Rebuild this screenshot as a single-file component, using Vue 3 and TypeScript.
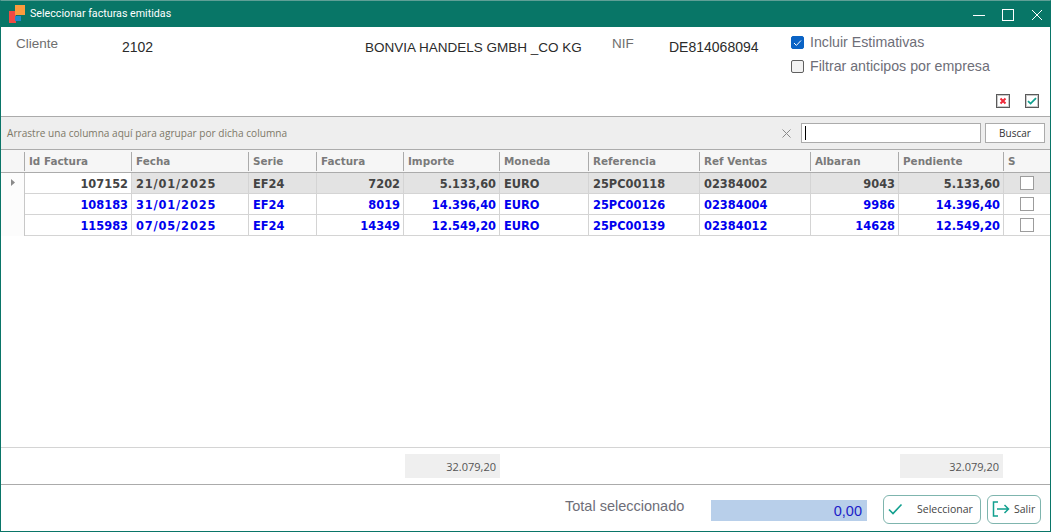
<script setup lang="ts">
type Row = {
  id: string;
  fecha: string;
  serie: string;
  factura: string;
  importe: string;
  moneda: string;
  referencia: string;
  refVentas: string;
  albaran: string;
  pendiente: string;
};

const columns = [
  "Id Factura",
  "Fecha",
  "Serie",
  "Factura",
  "Importe",
  "Moneda",
  "Referencia",
  "Ref Ventas",
  "Albaran",
  "Pendiente",
  "S",
];

const rows: Row[] = [
  {
    id: "107152",
    fecha: "21/01/2025",
    serie: "EF24",
    factura: "7202",
    importe: "5.133,60",
    moneda: "EURO",
    referencia: "25PC00118",
    refVentas: "02384002",
    albaran: "9043",
    pendiente: "5.133,60",
  },
  {
    id: "108183",
    fecha: "31/01/2025",
    serie: "EF24",
    factura: "8019",
    importe: "14.396,40",
    moneda: "EURO",
    referencia: "25PC00126",
    refVentas: "02384004",
    albaran: "9986",
    pendiente: "14.396,40",
  },
  {
    id: "115983",
    fecha: "07/05/2025",
    serie: "EF24",
    factura: "14349",
    importe: "12.549,20",
    moneda: "EURO",
    referencia: "25PC00139",
    refVentas: "02384012",
    albaran: "14628",
    pendiente: "12.549,20",
  },
];
</script>

<template>
  <div class="window">
    <header class="titlebar">
      <svg class="logo" width="24" height="22" viewBox="0 0 24 22">
        <rect x="0" y="6" width="7" height="12" fill="#f04a45" />
        <rect x="6" y="0" width="10" height="10" fill="#fb9b3d" />
        <rect x="6" y="11" width="6" height="5" fill="#2389c9" />
      </svg>
      <span class="title">Seleccionar facturas emitidas</span>
      <div class="win-buttons">
        <svg width="12" height="12" viewBox="0 0 12 12"><path d="M0 6.5h12" stroke="#fff" fill="none" /></svg>
        <svg width="12" height="12" viewBox="0 0 12 12"><rect x="0.5" y="0.5" width="11" height="11" stroke="#fff" fill="none" /></svg>
        <svg width="12" height="12" viewBox="0 0 12 12"><path d="M1 1l10 10M11 1L1 11" stroke="#fff" fill="none" /></svg>
      </div>
    </header>

    <section class="form">
      <div class="form-fields">
        <span class="label cliente">Cliente</span>
        <span class="value codigo">2102</span>
        <span class="value nombre">BONVIA HANDELS GMBH _CO KG</span>
        <span class="label nif">NIF</span>
        <span class="value nif-value">DE814068094</span>
        <div class="checks">
          <label class="check">
            <span class="box on">
              <svg width="9" height="8" viewBox="0 0 9 8"><path d="M1 4l2.4 2.4L8 1.5" stroke="#fff" fill="none" /></svg>
            </span>
            Incluir Estimativas
          </label>
          <label class="check">
            <span class="box"></span>
            Filtrar anticipos por empresa
          </label>
        </div>
      </div>
      <div class="mini-tools">
        <span class="mini">
          <svg width="8" height="8" viewBox="0 0 8 8"><path d="M1.5 1.5l5 5M6.5 1.5l-5 5" stroke="#ee2a3a" stroke-width="2" fill="none" /></svg>
        </span>
        <span class="mini">
          <svg width="10" height="8" viewBox="0 0 10 8"><path d="M1 4.2l2.6 2.4L9 1.2" stroke="#12a08f" stroke-width="1.8" fill="none" /></svg>
        </span>
      </div>
    </section>

    <div class="group-bar">
      <span class="group-hint">Arrastre una columna aquí para agrupar por dicha columna</span>
      <svg class="clear" width="9" height="9" viewBox="0 0 9 9"><path d="M0.5 0.5l8 8M8.5 0.5l-8 8" stroke="#8a8a8a" fill="none" /></svg>
      <div class="search"><i class="caret"></i></div>
      <button class="buscar">Buscar</button>
    </div>

    <div class="grid-head grid-cols">
      <div class="head-cell indicator"></div>
      <div v-for="col in columns" :key="col" class="head-cell"><span>{{ col }}</span></div>
    </div>

    <div class="grid-body">
      <div
        v-for="(row, i) in rows"
        :key="row.id"
        class="grid-row grid-cols"
        :class="{ current: i === 0 }"
      >
        <div class="indicator-cell">
          <svg v-if="i === 0" width="4" height="7" viewBox="0 0 4 7"><path d="M0 0l4 3.5L0 7z" fill="#8a8a8a" /></svg>
        </div>
        <div class="cell right id-cell">{{ row.id }}</div>
        <div class="cell fecha">{{ row.fecha }}</div>
        <div class="cell">{{ row.serie }}</div>
        <div class="cell right">{{ row.factura }}</div>
        <div class="cell right">{{ row.importe }}</div>
        <div class="cell">{{ row.moneda }}</div>
        <div class="cell">{{ row.referencia }}</div>
        <div class="cell">{{ row.refVentas }}</div>
        <div class="cell right">{{ row.albaran }}</div>
        <div class="cell right">{{ row.pendiente }}</div>
        <div class="cell check-cell"><span class="row-check"></span></div>
      </div>
    </div>

    <div class="summary grid-cols">
      <div class="sum sum-importe">32.079,20</div>
      <div class="sum sum-pendiente">32.079,20</div>
    </div>

    <footer class="bottom">
      <span class="total-label">Total seleccionado</span>
      <div class="total-value">0,00</div>
      <button class="action seleccionar">
        <svg width="15" height="12" viewBox="0 0 15 12"><path d="M1 6.5l4 4L13.5 1.5" stroke="#12a08f" stroke-width="1.6" fill="none" /></svg>
        <span>Seleccionar</span>
      </button>
      <button class="action salir">
        <svg width="18" height="16" viewBox="0 0 18 16">
          <path d="M6 1H1.5v14H6M5 8h11.5M12.5 4l4 4-4 4" stroke="#12a08f" stroke-width="1.5" fill="none" />
        </svg>
        <span>Salir</span>
      </button>
    </footer>
  </div>
</template>

<style scoped>
.window {
  width: 1051px;
  height: 532px;
  box-sizing: border-box;
  display: flex;
  flex-direction: column;
  background: #fff;
  border: 1px solid #0a7568;
  border-top-color: #5f9f96;
  font-family: "Liberation Sans", Arial, sans-serif;
  overflow: hidden;
}

.titlebar {
  height: 26px;
  flex: none;
  display: flex;
  align-items: center;
  background: #087667;
  color: #fff;
  font-family: Roboto, "Liberation Sans", sans-serif;
  font-size: 10.7px;
}

.logo {
  margin: 4px 0 0 8px;
  flex: none;
}

.title {
  margin-left: -3px;
  margin-top: -1px;
}

.win-buttons {
  margin-left: auto;
  display: flex;
  gap: 17px;
  padding-right: 7px;
  align-items: center;
  margin-top: 1px;
}

.form {
  height: 89px;
  flex: none;
  display: flex;
  flex-direction: column;
}

.form-fields {
  display: flex;
  align-items: flex-start;
  height: 67px;
}

.label {
  font-size: 13.5px;
  color: #6e6e6e;
  margin-top: 9px;
}

.value {
  font-size: 14px;
  color: #2b2b2b;
  margin-top: 12px;
}

.cliente { margin-left: 15px; width: 106px; }
.codigo { width: 243px; }
.nombre { width: 247px; font-size: 13.5px; margin-top: 13px; }
.nif { width: 57px; }
.nif-value { width: 122px; }

.checks {
  display: flex;
  flex-direction: column;
  gap: 9px;
  margin-top: 8px;
}

.check {
  display: flex;
  align-items: center;
  gap: 6px;
  font-size: 14.2px;
  line-height: 15px;
  color: #6e6e78;
}

.box {
  width: 11px;
  height: 11px;
  border: 1px solid #5f5f5f;
  border-radius: 2px;
  background: #f2f2f2;
  display: flex;
  align-items: center;
  justify-content: center;
}

.box.on {
  background: #0a63c5;
  border-color: #0a63c5;
}

.mini-tools {
  display: flex;
  justify-content: flex-end;
  gap: 15px;
  padding-right: 11px;
}

.mini {
  width: 12px;
  height: 12px;
  border: 1px solid #5a5a5a;
  display: flex;
  align-items: center;
  justify-content: center;
  box-shadow: 0 0 0 1px #c8c8c8 inset;
}

.group-bar {
  height: 34px;
  flex: none;
  box-sizing: border-box;
  display: flex;
  align-items: center;
  background: #eeeeee;
  border-top: 1px solid #ababab;
  border-bottom: 1px solid #ababab;
  padding-left: 6px;
}

.group-hint {
  font-family: "Open Sans", "Liberation Sans", sans-serif;
  font-size: 10.1px;
  color: #7d7868;
}

.clear {
  margin-left: auto;
}

.search {
  width: 178px;
  height: 18px;
  margin-left: 10px;
  border: 1px solid #ababab;
  background: #fff;
  display: flex;
  align-items: center;
}

.caret {
  display: block;
  width: 1px;
  height: 14px;
  margin-left: 3px;
  background: #000;
}

.buscar {
  width: 60px;
  height: 20px;
  margin: 0 5px 0 4px;
  padding: 0;
  border: 1px solid #ababab;
  background: #fff;
  font-family: "Open Sans", "Liberation Sans", sans-serif;
  font-size: 10px;
  color: #333;
}

.grid-cols {
  display: grid;
  grid-template-columns: 24px 107px 117px 68px 87px 96px 89px 111px 111px 88px 105px 46px;
}

.grid-head {
  height: 23px;
  flex: none;
  box-sizing: border-box;
  background: #f6f6f6;
  border-bottom: 1px solid #ababab;
  font-family: "DejaVu Sans", Verdana, sans-serif;
  font-size: 10.4px;
  font-weight: 700;
  color: #7a7a7a;
}

.head-cell {
  display: flex;
  align-items: center;
  box-sizing: border-box;
  height: 19px;
  margin-top: 2px;
  padding: 0 0 1px 4px;
  border-right: 1px solid #ababab;
}

.grid-head .head-cell:last-child {
  border-right: none;
}

.grid-body {
  flex: 1;
  min-height: 0;
  font-family: "DejaVu Sans", Verdana, sans-serif;
  font-size: 11.4px;
  font-weight: 700;
  color: #0000ee;
  border-bottom: 1px solid #d4d4d4;
}

.grid-row {
  height: 21px;
}

.grid-row.current {
  color: #444;
}

.indicator-cell {
  display: flex;
  align-items: center;
  padding-left: 10px;
  padding-bottom: 3px;
  box-sizing: border-box;
  border-right: 1px solid #c8c8c8;
  background: #fcfcfc;
}

.cell {
  box-sizing: border-box;
  display: flex;
  align-items: center;
  padding: 1px 3px 0 4px;
  border-right: 1px solid #d4d4d4;
  border-bottom: 1px solid #d4d4d4;
  white-space: nowrap;
}

.cell.right {
  justify-content: flex-end;
}

.cell.fecha {
  letter-spacing: 0.85px;
}

.current .cell {
  background: #e3e3e3;
}

.current .id-cell {
  background: #fff;
}

.check-cell {
  justify-content: center;
  padding: 0;
  border-right: none;
}

.row-check {
  width: 12px;
  height: 12px;
  border: 1px solid #9c9c9c;
  background: #fff;
  margin-right: 1px;
}

.summary {
  height: 37px;
  flex: none;
  box-sizing: border-box;
  border-bottom: 1px solid #ababab;
  align-items: start;
  padding-top: 6px;
}

.sum {
  height: 24px;
  box-sizing: border-box;
  background: #efefef;
  display: flex;
  align-items: center;
  justify-content: flex-end;
  padding-right: 4px;
  font-family: "Open Sans", "Liberation Sans", sans-serif;
  font-size: 11px;
  color: #555;
}

.sum-importe {
  grid-column: 6;
  margin: 0 0 0 1px;
}

.sum-pendiente {
  grid-column: 11;
  margin: 0 1px 0 1px;
}

.bottom {
  flex: none;
  height: 46px;
  box-sizing: border-box;
  display: flex;
  align-items: center;
  padding-right: 9px;
  padding-top: 2px;
}

.total-label {
  margin-left: 564px;
  width: 146px;
  font-size: 14.5px;
  color: #6e6e78;
  margin-top: -6px;
}

.total-value {
  width: 156px;
  height: 21px;
  box-sizing: border-box;
  margin-top: 2px;
  background: #b8cfea;
  color: #1c1cc8;
  font-size: 14.5px;
  line-height: 23px;
  text-align: right;
  padding-right: 5px;
}

.action {
  height: 29px;
  box-sizing: border-box;
  padding: 0;
  border: 1px solid #7fb5ae;
  border-radius: 6px;
  background: #fff;
  display: flex;
  align-items: center;
  font-family: "Open Sans", "Liberation Sans", sans-serif;
  font-size: 10.5px;
  color: #444;
}

.seleccionar {
  width: 98px;
  margin-left: 16px;
  padding-left: 4px;
  gap: 14px;
}

.salir {
  width: 54px;
  margin-left: 6px;
  padding-left: 4px;
  gap: 4px;
}
</style>
